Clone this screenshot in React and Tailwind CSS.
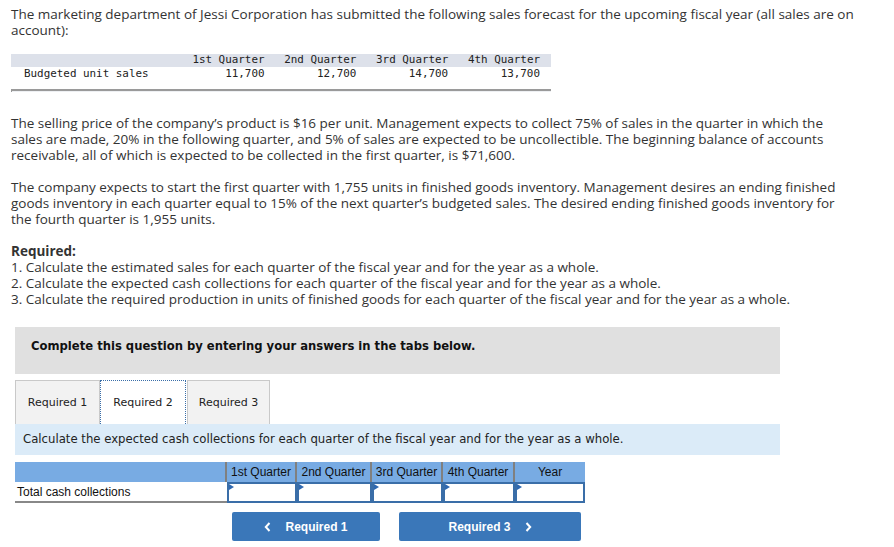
import React from 'react'

const quarters = ['1st Quarter', '2nd Quarter', '3rd Quarter', '4th Quarter']
const units = ['11,700', '12,700', '14,700', '13,700']

function ForecastTable() {
  return (
    <div className="mt-[16px] w-[540px] font-['DejaVu_Sans_Mono',monospace] text-[10.9px] text-[#222]">
      <div className="flex bg-[#dde1ea] h-[13px] items-center leading-none">
        <div className="w-[173px]" />
        {quarters.map((q) => (
          <div key={q} className="w-[92px] text-right pr-[11px]">{q}</div>
        ))}
      </div>
      <div className="flex h-[15px] items-center leading-none">
        <div className="w-[173px] pl-[13px]">Budgeted unit sales</div>
        {units.map((u) => (
          <div key={u} className="w-[92px] text-right pr-[11px]">{u}</div>
        ))}
      </div>
      <div className="mt-[7px] h-[3px] border-t-2 border-l border-[#9a9a9a] bg-[#eef0f3]" />
    </div>
  )
}

function Caret({ dir }) {
  return (
    <svg width="7" height="10" viewBox="0 0 7 10" className="inline-block">
      {dir === 'left' ? (
        <path d="M5.5 1 L1.8 5 L5.5 9" fill="none" stroke="white" strokeWidth="2" />
      ) : (
        <path d="M1.5 1 L5.2 5 L1.5 9" fill="none" stroke="white" strokeWidth="2" />
      )}
    </svg>
  )
}

function InputCell({ w }) {
  return (
    <div className={`relative h-[21px] border-2 border-[#3a6ea8] bg-white ${w}`}>
      <span className="absolute left-0 top-0 w-0 h-0 border-t-[3px] border-b-[3px] border-l-[5px] border-t-transparent border-b-transparent border-l-[#2f68b0]" />
    </div>
  )
}

export default function App() {
  const colW = ['w-[70px]', 'w-[75px]', 'w-[71px]', 'w-[72px]', 'w-[70px]']
  return (
    <div className="w-[894px] h-[547px] bg-white overflow-hidden">
      <div className="px-[11px] pt-[6px] font-['Open_Sans',sans-serif] text-[13.5px] leading-[16px] text-[#333] whitespace-nowrap">
        <p>
          The marketing department of Jessi Corporation has submitted the following sales forecast for the upcoming fiscal year (all sales are on
          <br />
          account):
        </p>
        <ForecastTable />
        <p className="mt-[23px]">
          The selling price of the company’s product is $16 per unit. Management expects to collect 75% of sales in the quarter in which the
          <br />
          sales are made, 20% in the following quarter, and 5% of sales are expected to be uncollectible. The beginning balance of accounts
          <br />
          receivable, all of which is expected to be collected in the first quarter, is $71,600.
        </p>
        <p className="mt-[16px]">
          The company expects to start the first quarter with 1,755 units in finished goods inventory. Management desires an ending finished
          <br />
          goods inventory in each quarter equal to 15% of the next quarter’s budgeted sales. The desired ending finished goods inventory for
          <br />
          the fourth quarter is 1,955 units.
        </p>
        <p className="mt-[16px] font-bold">Required:</p>
        <p>1. Calculate the estimated sales for each quarter of the fiscal year and for the year as a whole.</p>
        <p>2. Calculate the expected cash collections for each quarter of the fiscal year and for the year as a whole.</p>
        <p>3. Calculate the required production in units of finished goods for each quarter of the fiscal year and for the year as a whole.</p>
      </div>

      <div className="ml-[15px] mt-[20px] w-[765px] font-['DejaVu_Sans',Verdana,sans-serif]">
        <div className="h-[47px] bg-[#e0e0e0] flex items-center pl-[16px] pb-[7px] text-[11.6px] font-bold text-[#111]">
          Complete this question by entering your answers in the tabs below.
        </div>
        <div className="mt-[6px] flex items-end h-[44px] text-[11px] text-[#222]">
          <div className="h-[44px] w-[85px] bg-[#f2f2f2] border border-[#c9c9c9] border-b-0 flex items-center justify-center pt-[2px]">Required 1</div>
          <div className="h-[44px] w-[86px] bg-white border border-dotted border-[#3a6ea8] border-b-0 flex items-center justify-center pt-[2px]">Required 2</div>
          <div className="h-[44px] w-[83px] ml-[1px] bg-[#f2f2f2] border border-[#c9c9c9] border-b-0 flex items-center justify-center pt-[2px]">Required 3</div>
        </div>
        <div className="h-[31px] bg-[#dbebf8] flex items-center pl-[8px] text-[11.7px] text-[#222]">
          Calculate the expected cash collections for each quarter of the fiscal year and for the year as a whole.
        </div>
      </div>

      <div className="ml-[15px] mt-[7px] w-[570px] font-['Liberation_Sans',Arial,sans-serif] text-[12px] text-[#111]">
        <div className="flex h-[20px] bg-[#78abe3]">
          <div className="w-[212px] border-r-2 border-[#808080]" />
          {[...quarters, 'Year'].map((q, i) => (
            <div key={q} className={`${colW[i]} flex items-center justify-center border-r-2 border-[#808080] last:border-r-0`}>{q}</div>
          ))}
        </div>
        <div className="flex h-[21px] border-b-2 border-[#888]">
          <div className="w-[212px] pl-[2px] flex items-center">Total cash collections</div>
          {colW.map((w, i) => (
            <InputCell key={i} w={w} />
          ))}
        </div>
      </div>

      <div className="flex mt-[9px] font-['Liberation_Sans',Arial,sans-serif] text-[12px] font-bold text-white">
        <button className="ml-[232px] w-[148px] h-[29px] rounded-[2px] bg-[#3a77b9] flex items-center justify-center gap-[14px]">
          <Caret dir="left" /> Required 1
        </button>
        <button className="ml-[19px] w-[182px] h-[29px] rounded-[2px] bg-[#3a77b9] flex items-center justify-center gap-[14px]">
          Required 3 <Caret dir="right" />
        </button>
      </div>
    </div>
  )
}
